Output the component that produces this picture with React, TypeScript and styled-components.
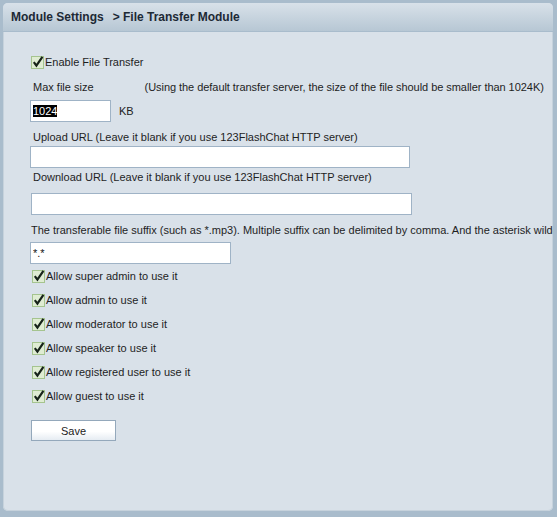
import { useEffect, useRef } from 'react';
import styled, { createGlobalStyle } from 'styled-components';

const GlobalStyle = createGlobalStyle`
  html, body {
    margin: 0;
    padding: 0;
    background: #a9bccc;
  }
  body {
    font-family: 'Liberation Sans', Arial, sans-serif;
    font-size: 11px;
    color: #1e1e1e;
  }
`;

const Frame = styled.div`
  width: 557px;
  height: 517px;
  box-sizing: border-box;
  padding: 3px 4px 6px 3px;
  background: #a9bccc;
`;

const Panel = styled.div`
  height: 100%;
  display: flex;
  flex-direction: column;
  border-radius: 5px;
  overflow: hidden;
  background: #d9e1e9;
  box-shadow: inset 0 0 0 1px #c6d2dc;
`;

const Header = styled.div`
  height: 28px;
  flex: none;
  display: flex;
  align-items: center;
  gap: 9px;
  padding: 0 8px;
  background: linear-gradient(#d8e1e9, #b7c7d4);
  border-bottom: 1px solid #a9bccc;
  font-family: 'Liberation Sans', Arial, sans-serif;
  font-weight: bold;
  font-size: 12px;
  color: #1d2935;
`;

const Body = styled.div`
  flex: 1;
  padding: 22px 0 0 27px;
  display: flex;
  flex-direction: column;
  align-items: flex-start;
  white-space: nowrap;
  overflow: hidden;
`;

const CheckRow = styled.label<{ $tall?: boolean; $indent?: number }>`
  display: flex;
  align-items: center;
  height: ${p => (p.$tall ? 24 : 16)}px;
  padding-left: ${p => p.$indent ?? 2}px;
  line-height: 16px;
  cursor: pointer;
`;

const Label = styled.div<{ $top: number; $indent?: number }>`
  display: flex;
  line-height: 16px;
  margin-top: ${p => p.$top}px;
  padding-left: ${p => p.$indent ?? 3}px;
`;

const Hint = styled.span`
  margin-left: 51px;
  letter-spacing: -0.05px;
`;

const FieldRow = styled.div<{ $top: number }>`
  display: flex;
  align-items: center;
  gap: 8px;
  margin-top: ${p => p.$top}px;
`;

const TextInput = styled.input<{ $width: number; $offset?: number }>`
  box-sizing: border-box;
  width: ${p => p.$width}px;
  height: 22px;
  margin: 0 0 0 ${p => p.$offset ?? 0}px;
  padding: 0 2px;
  border: 1px solid #9fb3c6;
  background: #fff;
  font-family: 'Liberation Sans', Arial, sans-serif;
  font-size: 11px;
  color: #111;
  outline: none;
  &::selection {
    background: #000;
    color: #fff;
  }
`;

const Unit = styled.span`
  color: #222;
`;

const SaveButton = styled.button`
  margin: 12px 0 0 1px;
  width: 85px;
  height: 21px;
  border: 1px solid #94a8bb;
  background: linear-gradient(#ffffff 55%, #e6ecf2);
  font-family: 'Liberation Sans', Arial, sans-serif;
  font-size: 11px;
  color: #222;
  padding: 0;
  cursor: pointer;
`;

function Check() {
  return (
    <svg width="14" height="14" viewBox="0 0 14 14">
      <rect x="0.5" y="1.5" width="12" height="12" fill="#dfecd3" stroke="#a5c48f" />
      <path d="M2.8 7.2 L5.4 10.6 L11.4 1.8" fill="none" stroke="#17231a" strokeWidth="2.2" />
    </svg>
  );
}

const permissions = [
  'Allow super admin to use it',
  'Allow admin to use it',
  'Allow moderator to use it',
  'Allow speaker to use it',
  'Allow registered user to use it',
  'Allow guest to use it',
];

export default function App() {
  const sizeRef = useRef<HTMLInputElement>(null);
  useEffect(() => {
    if (sizeRef.current) {
      sizeRef.current.focus();
      sizeRef.current.select();
    }
  }, []);

  return (
    <>
      <GlobalStyle />
      <Frame>
        <Panel>
          <Header>
            <span>Module Settings</span>
            <span>&gt; File Transfer Module</span>
          </Header>
          <Body>
            <CheckRow $indent={1}>
              <Check />
              Enable File Transfer
            </CheckRow>
            <Label $top={9}>
              Max file size
              <Hint>
                (Using the default transfer server, the size of the file should be smaller than 1024K)
              </Hint>
            </Label>
            <FieldRow $top={5}>
              <TextInput ref={sizeRef} $width={81} defaultValue="1024" />
              <Unit>KB</Unit>
            </FieldRow>
            <Label $top={7}>Upload URL (Leave it blank if you use 123FlashChat HTTP server)</Label>
            <FieldRow $top={1}>
              <TextInput $width={380} />
            </FieldRow>
            <Label $top={1}>Download URL (Leave it blank if you use 123FlashChat HTTP server)</Label>
            <FieldRow $top={8}>
              <TextInput $width={381} $offset={1} />
            </FieldRow>
            <Label $top={7} $indent={1}>
              The transferable file suffix (such as *.mp3). Multiple suffix can be delimited by comma. And the asterisk wildcard can be used.
            </Label>
            <FieldRow $top={4}>
              <TextInput $width={201} defaultValue="*.*" />
            </FieldRow>
            {permissions.map(text => (
              <CheckRow $tall key={text}>
                <Check />
                {text}
              </CheckRow>
            ))}
            <SaveButton type="button">Save</SaveButton>
          </Body>
        </Panel>
      </Frame>
    </>
  );
}
